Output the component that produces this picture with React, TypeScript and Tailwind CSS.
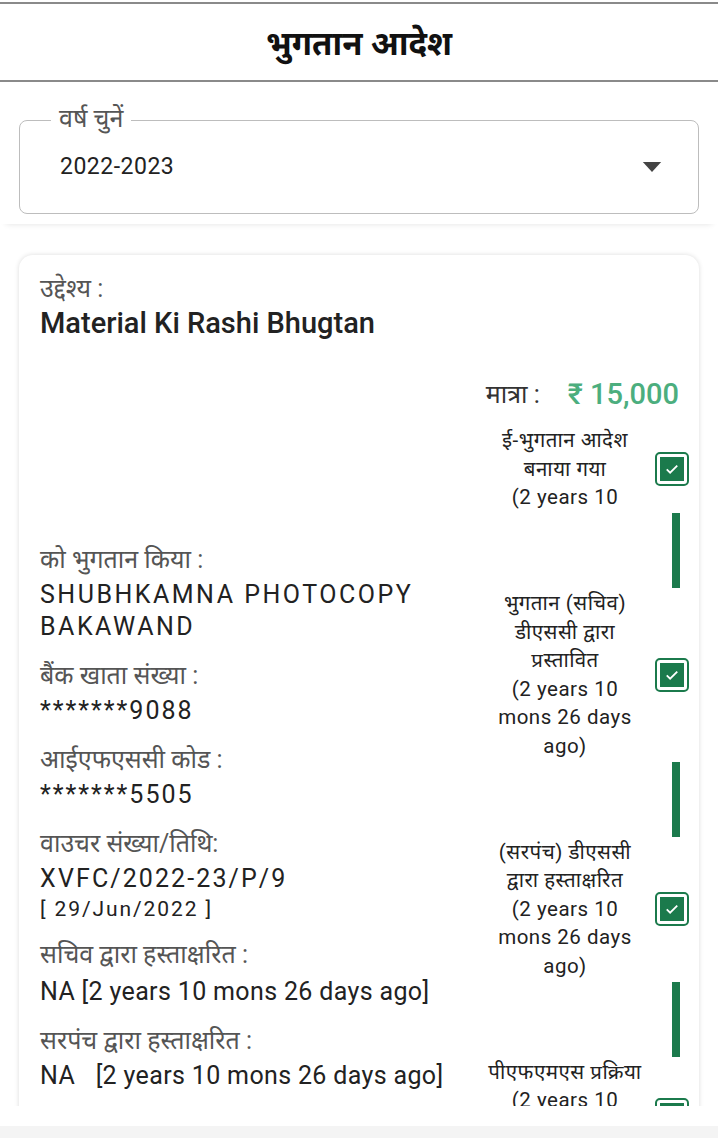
import React from "react";

interface IStep {
  title: string[];
  ago: string[];
  clip?: boolean;
}

const steps: IStep[] = [
  { title: ["ई-भुगतान आदेश", "बनाया गया"], ago: ["(2 years 10", "mons 26 days", "ago)"], clip: true },
  { title: ["भुगतान (सचिव)", "डीएससी द्वारा", "प्रस्तावित"], ago: ["(2 years 10", "mons 26 days", "ago)"] },
  { title: ["(सरपंच) डीएससी", "द्वारा हस्ताक्षरित"], ago: ["(2 years 10", "mons 26 days", "ago)"] },
  { title: ["पीएफएमएस प्रक्रिया"], ago: ["(2 years 10", "mons 26 days", "ago)"] },
];

const CheckIcon: React.FC = () => (
  <div className="w-[34px] h-[34px] rounded-[5px] border-[2.5px] border-[#1b7a4c] p-[3px] bg-white shrink-0">
    <div className="w-full h-full bg-[#1b7a4c] flex items-center justify-center">
      <svg viewBox="0 0 24 24" className="w-[18px] h-[18px]" fill="none" stroke="white" strokeWidth="2.4">
        <path d="M5 12.5l4.5 4.5L19 7.5" />
      </svg>
    </div>
  </div>
);

const Field: React.FC<{ label: string; track?: string; valueClass?: string; children: React.ReactNode }> = ({
  label,
  track = "tracking-[2px]",
  valueClass = "",
  children,
}) => (
  <div className="mb-[14px]">
    <div className="text-[25px] leading-[38px] text-[#555]">{label}</div>
    <div className={"text-[25px] leading-[32px] text-[#222] " + track + " " + valueClass}>{children}</div>
  </div>
);

const App: React.FC = () => {
  return (
    <div
      className="w-[718px] h-[1138px] bg-white flex flex-col overflow-hidden"
      style={{ fontFamily: "Roboto, 'Noto Sans', sans-serif" }}
    >
      {/* header */}
      <div className="border-t-2 border-b-2 border-[#8a8a8a] mt-[2px] h-[80px] flex items-center justify-center shrink-0">
        <h1 className="text-[33px] leading-[40px] font-bold text-[#111] mt-[4px]">भुगतान आदेश</h1>
      </div>

      {/* year select */}
      <div className="px-[19px] pt-[38px] pb-[10px] shadow-[0_6px_6px_-6px_rgba(0,0,0,0.12)] shrink-0">
        <div className="relative h-[94px] border-[1.5px] border-[#bdbdbd] rounded-[8px] flex items-center justify-between pl-[40px] pr-[36px]">
          <span className="absolute -top-[19px] left-[31px] bg-white px-[8px] text-[25px] leading-[34px] text-[#555]">
            वर्ष चुनें
          </span>
          <span className="text-[23px] text-[#222] tracking-[0.5px]">2022-2023</span>
          <svg viewBox="0 0 20 12" className="w-[20px] h-[11px]" fill="#444">
            <path d="M0 0h20L10 11z" />
          </svg>
        </div>
      </div>

      {/* scroll area */}
      <div className="h-[882px] overflow-hidden px-[19px] pt-[31px] shrink-0">
        <div className="rounded-[14px] shadow-[0_0_5px_rgba(0,0,0,0.14)] bg-white pl-[21px] pr-[10px] pt-[20px] pb-[20px]">
          <div className="text-[25px] leading-[28px] text-[#555]">उद्देश्य :</div>
          <div className="text-[29px] leading-[40px] font-medium text-[#222]">Material Ki Rashi Bhugtan</div>

          <div className="flex">
            <div className="flex-1 pt-[198px]">
              <Field label="को भुगतान किया :" track="tracking-[2.5px]">
                SHUBHKAMNA PHOTOCOPY
                <br />
                BAKAWAND
              </Field>
              <Field label="बैंक खाता संख्या :">*******9088</Field>
              <Field label="आईएफएससी कोड :">*******5505</Field>
              <div className="mb-[13px]">
                <div className="text-[25px] leading-[38px] text-[#555]">वाउचर संख्या/तिथि:</div>
                <div className="text-[25px] leading-[32px] text-[#222] tracking-[2.1px]">XVFC/2022-23/P/9</div>
                <div className="text-[21px] leading-[28px] text-[#222] tracking-[1.9px]">[ 29/Jun/2022 ]</div>
              </div>
              <Field label="सचिव द्वारा हस्ताक्षरित :" track="tracking-[0.35px]" valueClass="mt-[2px]">
                NA [2 years 10 mons 26 days ago]
              </Field>
              <Field label="सरपंच द्वारा हस्ताक्षरित :" track="tracking-[0.35px]">
                NA <span className="ml-[14px]">[2 years 10 mons 26 days ago]</span>
              </Field>
            </div>

            <div className="w-[230px] pt-[30px]">
              <div className="flex items-center justify-end gap-[28px] h-[44px] pr-[10px]">
                <span className="text-[25px] text-[#333]">मात्रा :</span>
                <span className="text-[29px] font-medium text-[#4cae7e]">₹ 15,000</span>
              </div>
              <div className="mt-[9px]">
                {steps.map((s, i) => (
                  <div key={i}>
                    <div className="flex items-center justify-end">
                      <div
                        className={
                          "w-[170px] text-center text-[20.5px] leading-[28.6px] text-[#222] tracking-[0.5px] " +
                          (s.clip ? "h-[86px] overflow-hidden" : "")
                        }
                      >
                        {s.title.map((t, j) => (
                          <div key={"t" + j}>{t}</div>
                        ))}
                        {s.ago.map((t, j) => (
                          <div key={"a" + j}>{t}</div>
                        ))}
                      </div>
                      <div className="ml-[5px]">
                        <CheckIcon />
                      </div>
                    </div>
                    {i < steps.length - 1 && (
                      <div className="flex justify-end pr-[9px] py-[1px]">
                        <div className="w-[8px] h-[75px] bg-[#1b7a4c]" />
                      </div>
                    )}
                  </div>
                ))}
              </div>
            </div>
          </div>
        </div>
      </div>
      <div className="flex-1 bg-white" />
      <div className="h-[12px] bg-[#f4f4f4] shrink-0" />
    </div>
  );
};

export default App;
